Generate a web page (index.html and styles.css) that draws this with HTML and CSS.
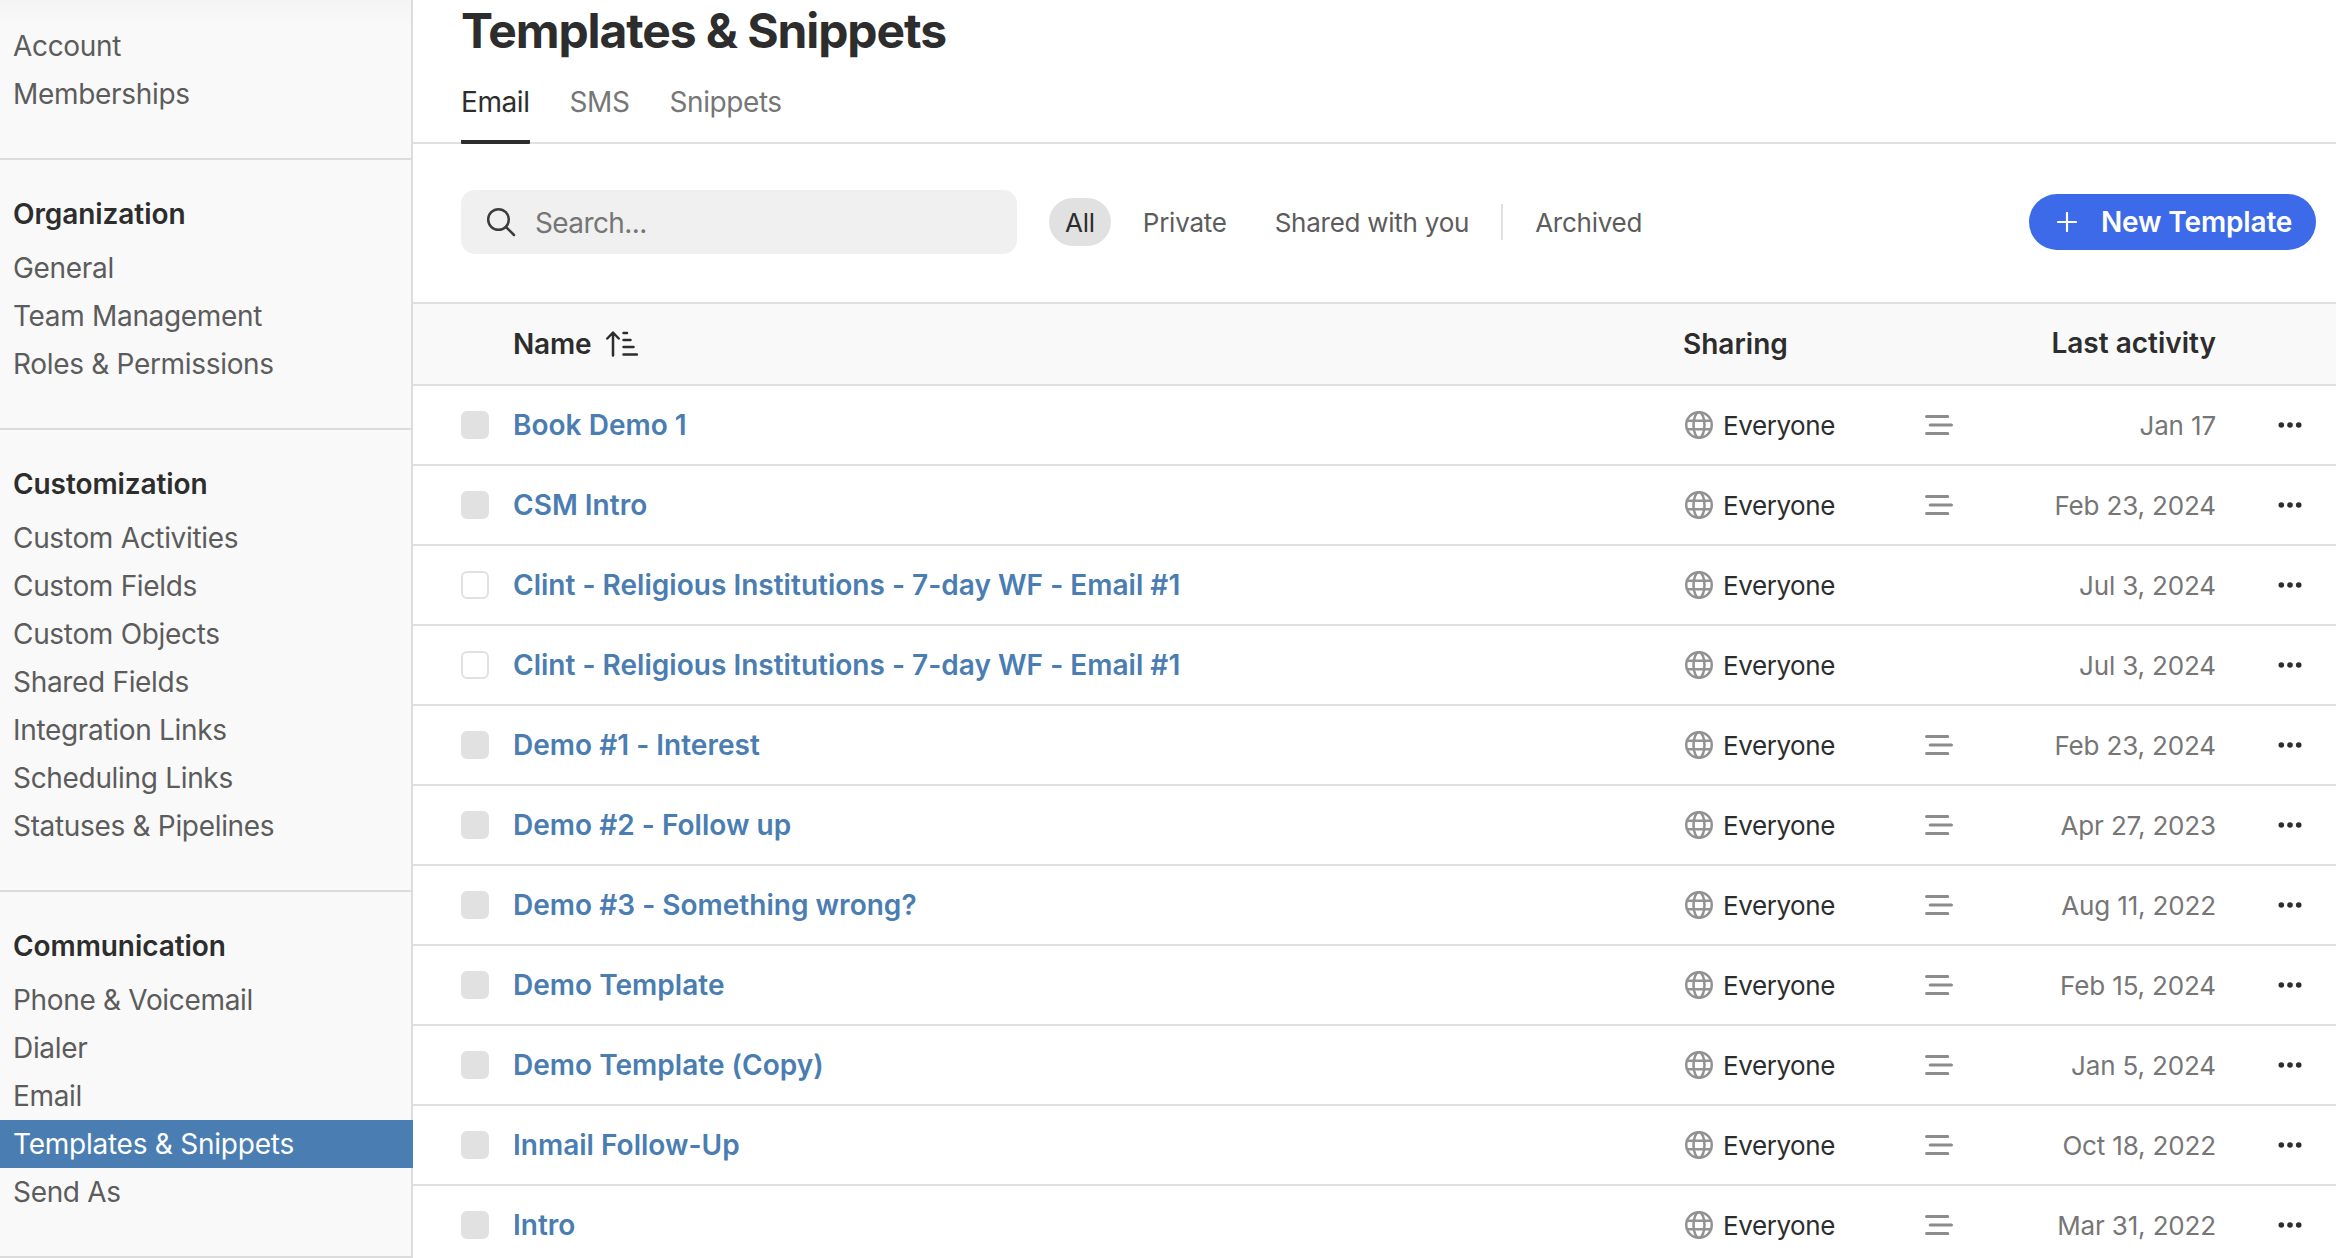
FILE: index.html
```html
<!DOCTYPE html>
<html lang="en">
<head>
<meta charset="utf-8">
<title>Templates &amp; Snippets</title>
<link rel="stylesheet" href="styles.css">
</head>
<body>
<svg class="sprite" aria-hidden="true">
  <symbol id="globe" viewBox="0 0 28 28"><g fill="none" stroke="currentColor" stroke-width="2.500"><circle cx="14" cy="14" r="12.750"/><ellipse cx="14" cy="14" rx="5.500" ry="12.750"/><path d="M2 9.700h24M2 18.300h24"/></g></symbol>
  <symbol id="lines" viewBox="0 0 28 22"><path d="M1.500 2.500h21.300M5.200 11h21.300M1.500 19.500h21.300" fill="none" stroke="currentColor" stroke-width="3" stroke-linecap="round"/></symbol>
  <symbol id="dots" viewBox="0 0 24 6"><circle cx="3.300" cy="3" r="2.800"/><circle cx="12" cy="3" r="2.800"/><circle cx="20.700" cy="3" r="2.800"/></symbol>
</svg>
<div class="app">
  <nav class="sidebar">
    <section class="group group-first">
      <a class="item">Account</a><a class="item">Memberships</a>
    </section>
    <section class="group">
      <h2 class="group-title">Organization</h2>
      <a class="item">General</a><a class="item">Team Management</a><a class="item">Roles &amp; Permissions</a>
    </section>
    <section class="group">
      <h2 class="group-title">Customization</h2>
      <a class="item">Custom Activities</a><a class="item">Custom Fields</a><a class="item">Custom Objects</a><a class="item">Shared Fields</a><a class="item">Integration Links</a><a class="item">Scheduling Links</a><a class="item">Statuses &amp; Pipelines</a>
    </section>
    <section class="group">
      <h2 class="group-title">Communication</h2>
      <a class="item">Phone &amp; Voicemail</a><a class="item">Dialer</a><a class="item">Email</a><a class="item active">Templates &amp; Snippets</a><a class="item">Send As</a>
    </section>
  </nav>
  <main class="main">
    <h1 class="title">Templates &amp; Snippets</h1>
    <div class="tabs"><a class="tab selected">Email</a><a class="tab">SMS</a><a class="tab">Snippets</a></div>
    <div class="toolbar">
      <div class="search">
        <svg class="search-icon" viewBox="0 0 30 30"><g fill="none" stroke="currentColor" stroke-width="2.500" stroke-linecap="round"><circle cx="12.500" cy="12.500" r="10.300"/><path d="M20 20l8 8"/></g></svg>
        <span class="search-text">Search...</span>
      </div>
      <div class="filters">
        <a class="filter chosen">All</a><a class="filter">Private</a><a class="filter">Shared with you</a><i class="divider"></i><a class="filter">Archived</a>
      </div>
      <button class="new-button"><svg class="plus" viewBox="0 0 20 20"><path d="M10 1v18M1 10h18" stroke="currentColor" stroke-width="2.200" stroke-linecap="round"/></svg>New Template</button>
    </div>
    <div class="row head">
      <span></span>
      <span class="head-name">Name <svg class="sort" viewBox="0 0 32 26"><path d="M7 24.500V2M1.300 7.500L7 1.500l5.700 6M17.500 2h3.500M17.500 9h7M17.500 16h10M17.500 23.500h13.500" fill="none" stroke="currentColor" stroke-width="2.500" stroke-linecap="round" stroke-linejoin="round"/></svg></span>
      <span class="head-sharing">Sharing</span><span></span><span class="head-date">Last activity</span><span></span>
    </div>
    <div id="rows"></div>
  </main>
</div>
<script src="rows.js"></script>
</body>
</html>
```
FILE: styles.css
```css
* { box-sizing: border-box; }
body { margin: 0; background: #fff; color: #2d2d2d; font: 28px/48px Inter, "Liberation Sans", sans-serif; overflow: hidden; }
.sprite { display: none; }
.app { display: grid; grid-template-columns: 413px 1fr; height: 1258px; overflow: hidden; }
.sidebar { background: linear-gradient(#f4f4f4, #f9f9f9 26px); box-shadow: inset -2px 0 #dcdcdc; color: #5c5c5c; }
.group { padding-bottom: 40px; border-bottom: 2px solid #dcdcdc; }
.group-first { padding-top: 22px; }
.group-title { margin: 0; padding: 30px 13px 6px; font-size: 28px; line-height: 48px; font-weight: 600; letter-spacing: -0.08px; color: #2d2d2d; }
.item { display: block; padding-left: 13px; height: 48px; letter-spacing: -0.32px; white-space: nowrap; }
.item.active { background: #4a7db2; color: #fff; letter-spacing: -0.24px; }
.main { min-width: 0; }
.title { margin: 0; height: 64px; padding-left: 48px; font-size: 48px; line-height: 62px; font-weight: 700; letter-spacing: -1.1px; }
.tabs { display: flex; gap: 40px; height: 80px; padding-left: 48px; border-bottom: 2px solid #e0e0e0; }
.tab { height: 80px; padding-top: 14px; letter-spacing: -0.42px; color: #767676; }
.tab.selected { color: #2d2d2d; border-bottom: 4px solid #2d2d2d; border-radius: 0 0 1px 1px; }
.toolbar { display: flex; align-items: center; height: 158px; padding: 0 20px 2px 48px; }
.search { display: flex; align-items: center; gap: 19px; width: 556px; height: 64px; padding-left: 25px; border-radius: 14px; background: #f0f0f0; color: #767676; }
.search-icon { width: 30px; height: 30px; color: #3c3c3c; }
.search-text { padding-top: 2px; letter-spacing: -0.6px; }
.filters { display: flex; align-items: center; margin-left: 32px; font-size: 26px; letter-spacing: -0.25px; color: #5c5c5c; }
.filter { height: 48px; padding: 1px 16px 0; margin-right: 16px; border-radius: 24px; }
.filter.chosen { background: #e1e1e1; color: #2d2d2d; }
.divider { width: 2px; height: 36px; margin-right: 16px; background: #e0e0e0; }
.new-button { display: flex; align-items: center; gap: 24px; width: 287px; height: 56px; margin-left: auto; padding: 0 0 0 28px; border: 0; border-radius: 28px; background: #3d6ae8; color: #fff; font: 600 28px/56px Inter, sans-serif; letter-spacing: -0.15px; white-space: nowrap; }
.plus { width: 20px; height: 20px; }
.row { display: grid; grid-template-columns: 100px 1171px 241px 59px 1fr 120px; align-items: center; height: 80px; border-bottom: 2px solid #e0e0e0; }
.head { height: 84px; background: #f9f9f9; border-top: 2px solid #e0e0e0; font-weight: 600; }
.head-name { display: flex; align-items: center; gap: 15px; letter-spacing: -0.2px; }
.head-sharing { margin-left: -1px; }
.sort { width: 32px; height: 26px; }
.head-date, .date { text-align: right; }
.head-date { padding-bottom: 2px; }
.check { width: 28px; height: 28px; margin-left: 48px; border-radius: 6px; background: #e1e1e1; }
.check.open { background: #fff; border: 2px solid #e1e1e1; }
.name { color: #4a7db2; font-weight: 600; letter-spacing: 0.02px; }
.share { display: flex; align-items: center; gap: 10px; font-size: 26px; letter-spacing: -0.42px; }
.share-label { padding-top: 2px; }
.globe { width: 28px; height: 28px; margin-left: 1px; color: #929292; }
.lines { display: block; width: 28px; height: 22px; color: #8c8c8c; }
.date { padding-top: 2px; font-size: 26px; letter-spacing: -0.15px; color: #767676; }
.dots { display: block; width: 24px; height: 6px; margin-left: 62px; fill: #2d2d2d; }
```
FILE: rows.js
```js
const templates = [
  ["Book Demo 1", "Jan 17", true],
  ["CSM Intro", "Feb 23, 2024", true],
  ["Clint - Religious Institutions - 7-day WF - Email #1", "Jul 3, 2024", false],
  ["Clint - Religious Institutions - 7-day WF - Email #1", "Jul 3, 2024", false],
  ["Demo #1 - Interest", "Feb 23, 2024", true],
  ["Demo #2 - Follow up", "Apr 27, 2023", true],
  ["Demo #3 - Something wrong?", "Aug 11, 2022", true],
  ["Demo Template", "Feb 15, 2024", true],
  ["Demo Template (Copy)", "Jan 5, 2024", true],
  ["Inmail Follow-Up", "Oct 18, 2022", true],
  ["Intro", "Mar 31, 2022", true]
];
document.getElementById("rows").innerHTML = templates.map(([name, date, used]) => `
  <div class="row">
    <span class="check${used ? "" : " open"}"></span>
    <a class="name">${name}</a>
    <span class="share"><svg class="globe"><use href="#globe"/></svg><span class="share-label">Everyone</span></span>
    <span>${used ? '<svg class="lines"><use href="#lines"/></svg>' : ""}</span>
    <span class="date">${date}</span>
    <svg class="dots"><use href="#dots"/></svg>
  </div>`).join("");
```
